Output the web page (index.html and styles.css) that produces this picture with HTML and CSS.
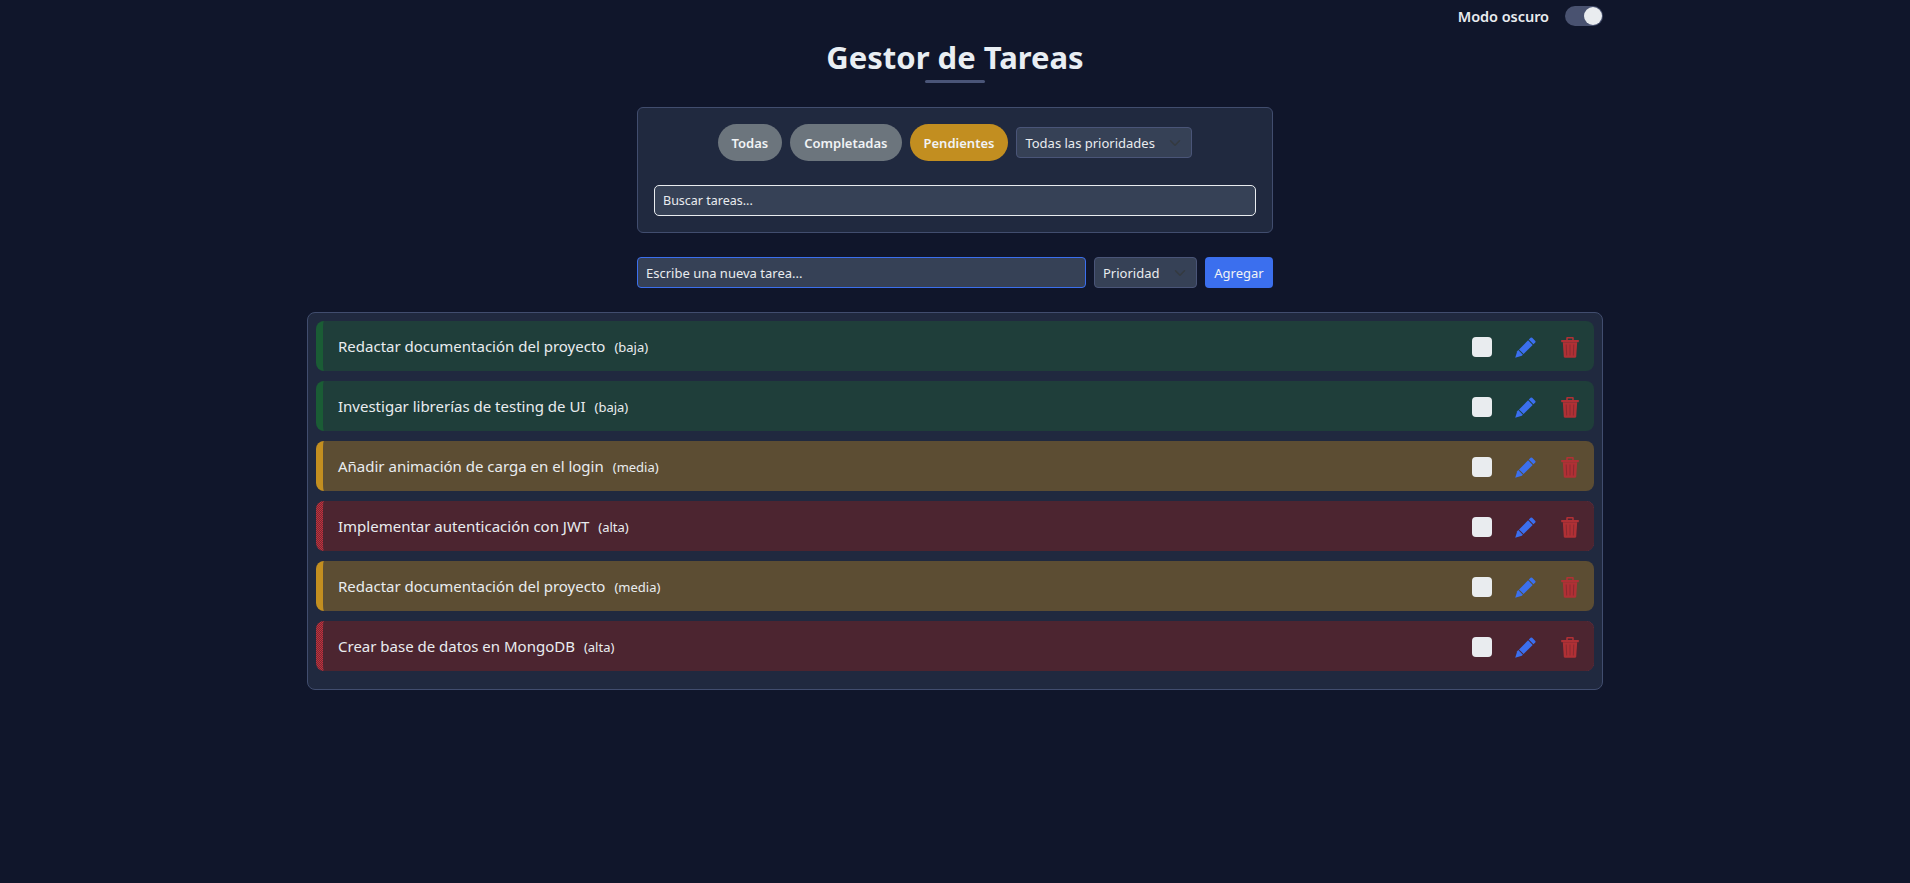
FILE: index.html
```html
<!DOCTYPE html>
<html lang="es">
<head>
<meta charset="utf-8">
<title>Gestor de Tareas</title>
<link rel="stylesheet" href="styles.css">
</head>
<body>
<svg class="defs" width="0" height="0" aria-hidden="true">
  <symbol id="pencil" viewBox="0 0 21 21">
    <path d="M0.2 20.8 2.2 14.2 3.3 13.1 7.9 17.7 6.8 18.8Z"/>
    <path d="M4 12.4 13.1 3.3 17.7 7.9 8.6 17Z"/>
    <path d="M13.8 2.6 15.6 0.8Q16.4 0 17.2 0.8L20.3 3.9Q21 4.7 20.3 5.4L18.4 7.2Z"/>
  </symbol>
  <symbol id="trash" viewBox="0 0 18 21">
    <path d="M5.2 3V1Q5.2 0 6.2 0H11.8Q12.8 0 12.8 1V3H11.2V1.6H6.8V3Z"/>
    <path d="M0.2 3H17.8V5.2H0.2Z"/>
    <path d="M1.8 5.2H16.2L15.2 19.6Q15.1 20.8 13.9 20.8H4.1Q2.9 20.8 2.8 19.6Z"/>
    <path class="trash-lines" d="M5.2 7.5 5.7 18.5M9 7.5V18.5M12.8 7.5 12.3 18.5"/>
  </symbol>
</svg>
<main class="page">
  <div class="mode">
    <span class="mode-label">Modo oscuro</span>
    <span class="switch"><span class="knob"></span></span>
  </div>
  <h1 class="title">Gestor de Tareas</h1>
  <div class="rule"></div>

  <section class="filters">
    <div class="filter-row">
      <button class="pill">Todas</button>
      <button class="pill">Completadas</button>
      <button class="pill pill-active">Pendientes</button>
      <select class="field select select-all"><option>Todas las prioridades</option></select>
    </div>
    <input class="field search" placeholder="Buscar tareas...">
  </section>

  <form class="add-row">
    <input class="field new-task" placeholder="Escribe una nueva tarea...">
    <select class="field select select-priority"><option>Prioridad</option></select>
    <button class="add-btn" type="button">Agregar</button>
  </form>

  <ul class="list">
    <li class="task low"><span class="task-text">Redactar documentación del proyecto<small>(baja)</small></span>
      <span class="actions"><span class="check"></span><svg class="icon edit"><use href="#pencil"/></svg><svg class="icon del"><use href="#trash"/></svg></span></li>
    <li class="task low"><span class="task-text">Investigar librerías de testing de UI<small>(baja)</small></span>
      <span class="actions"><span class="check"></span><svg class="icon edit"><use href="#pencil"/></svg><svg class="icon del"><use href="#trash"/></svg></span></li>
    <li class="task mid"><span class="task-text">Añadir animación de carga en el login<small>(media)</small></span>
      <span class="actions"><span class="check"></span><svg class="icon edit"><use href="#pencil"/></svg><svg class="icon del"><use href="#trash"/></svg></span></li>
    <li class="task high"><span class="task-text">Implementar autenticación con JWT<small>(alta)</small></span>
      <span class="actions"><span class="check"></span><svg class="icon edit"><use href="#pencil"/></svg><svg class="icon del"><use href="#trash"/></svg></span></li>
    <li class="task mid"><span class="task-text">Redactar documentación del proyecto<small>(media)</small></span>
      <span class="actions"><span class="check"></span><svg class="icon edit"><use href="#pencil"/></svg><svg class="icon del"><use href="#trash"/></svg></span></li>
    <li class="task high"><span class="task-text">Crear base de datos en MongoDB<small>(alta)</small></span>
      <span class="actions"><span class="check"></span><svg class="icon edit"><use href="#pencil"/></svg><svg class="icon del"><use href="#trash"/></svg></span></li>
  </ul>
</main>
</body>
</html>
```

FILE: styles.css
```css
* { box-sizing: border-box; }
html, body { margin: 0; height: 100%; }
body {
  background: #10162b;
  color: #e9ecef;
  font-family: "Noto Sans", "Open Sans", sans-serif;
  font-size: 15px;
}
.defs { position: absolute; }
.page { width: 1296px; margin: 0 auto; }

.mode {
  display: flex;
  justify-content: flex-end;
  align-items: center;
  gap: 16px;
  padding-top: 6px;
  height: 26px;
}
.mode-label { font-size: 14.5px; font-weight: 600; letter-spacing: -.05px; }
.switch {
  width: 38px;
  height: 20px;
  border-radius: 10px;
  background: #495270;
  display: flex;
  justify-content: flex-end;
  padding: 1px;
}
.knob { width: 18px; height: 18px; border-radius: 50%; background: #e9ecef; }

.title {
  margin: 12px 0 0;
  text-align: center;
  font-size: 31px;
  line-height: 38px;
  font-weight: 700;
  color: #e9eef3;
}
.rule {
  width: 60px;
  height: 3px;
  margin: 4px auto 24px;
  border-radius: 2px;
  background: #4a5578;
}

.filters {
  width: 636px;
  margin: 0 auto;
  padding: 16px;
  background: #20293f;
  border: 1px solid #414d6e;
  border-radius: 6px;
}
.filter-row {
  display: flex;
  justify-content: center;
  align-items: center;
  gap: 8px;
  margin-bottom: 24px;
}
.pill {
  height: 37px;
  padding: 0 14px;
  border: 0;
  border-radius: 18.5px;
  background: #6c757d;
  color: #f1f3f5;
  font: 600 13px "Noto Sans", sans-serif;
}
.pill-active { background: #c28e20; }

.field {
  height: 31px;
  padding: 0 8px;
  background-color: #364156;
  border: 1px solid #4a5578;
  border-radius: 4px;
  color: #e9ecef;
  font: 13px "Noto Sans", sans-serif;
  outline: 0;
}
.field::placeholder { color: #e9ecef; opacity: 1; }
.select {
  appearance: none;
  background-repeat: no-repeat;
  background-position: right 8px center;
  background-size: 16px 12px;
  background-image: url("data:image/svg+xml,%3csvg xmlns='http://www.w3.org/2000/svg' viewBox='0 0 16 16'%3e%3cpath fill='none' stroke='%23343a40' stroke-linecap='round' stroke-linejoin='round' stroke-width='2' d='m2 5 6 6 6-6'/%3e%3c/svg%3e");
}
.select-all { width: 176px; }
.search { display: block; width: 602px; border-color: #e9ecef; border-radius: 5px; font-size: 12.5px; }

.add-row {
  width: 636px;
  margin: 24px auto;
  display: flex;
  gap: 8px;
}
.new-task { flex: 1; min-width: 0; border-color: #3b6fee; }
.select-priority { width: 103px; }
.add-btn {
  width: 68px;
  height: 31px;
  border: 0;
  border-radius: 4px;
  background: #3b6fee;
  color: #f1f3f5;
  font: 13px "Noto Sans", sans-serif;
}

.list {
  list-style: none;
  margin: 0;
  padding: 8px 8px 18px;
  display: flex;
  flex-direction: column;
  gap: 10px;
  background: #20293f;
  border: 1px solid #414d6e;
  border-radius: 8px;
}
.task {
  height: 50px;
  display: flex;
  justify-content: space-between;
  align-items: center;
  padding: 0 15px;
  border-left: 7px solid;
  border-radius: 8px;
}
.low { background: #1f3e3a; border-color: #1a5c35; }
.mid { background: #5c4d33; border-color: #c28e20; }
.high {
  border-color: transparent;
  background:
    linear-gradient(#4c2530, #4c2530) padding-box,
    repeating-conic-gradient(#c0323e 0 25%, #7a2833 0 50%) 0 0 / 2px 2px border-box;
}
.task-text { font-size: 15px; }
.task-text small { font-size: 13px; margin-left: 9px; }
.actions { display: flex; align-items: center; padding-top: 2px; }
.check {
  width: 20px;
  height: 20px;
  border-radius: 4px;
  background: #e9ecef;
  margin-right: 23px;
}
.icon { height: 21px; display: block; }
.edit { width: 21px; margin-right: 25px; fill: #3b6fee; }
.del { width: 18px; fill: #b03035; }
.trash-lines { fill: none; stroke: #8a2a30; stroke-width: 1; }
```
